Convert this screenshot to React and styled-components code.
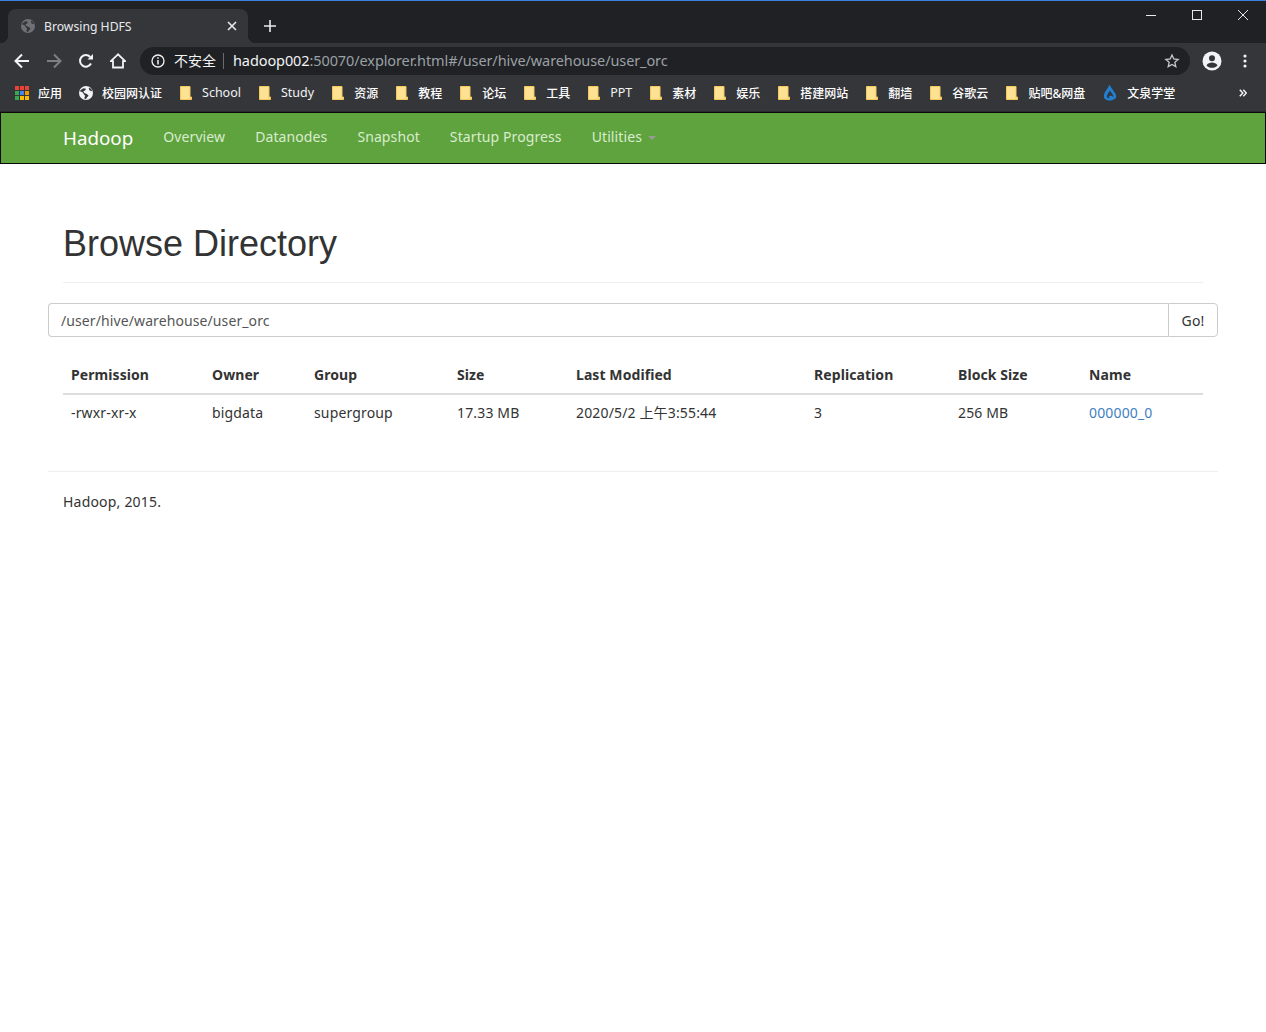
import React from 'react';
import styled, { createGlobalStyle } from 'styled-components';

const UI_FONT = '"Noto Sans", "Noto Sans CJK SC", sans-serif';

const GlobalStyle = createGlobalStyle`
  html, body {
    margin: 0;
    padding: 0;
    background: #fff;
  }
  body {
    font-family: ${UI_FONT};
    font-size: 14px;
    color: #333;
  }
`;

const TabStrip = styled.div`
  display: flex;
  height: 43px;
  box-sizing: border-box;
  border-top: 1px solid #3b82e0;
  background: #202124;
`;

const Tab = styled.div`
  position: relative;
  display: flex;
  align-items: center;
  box-sizing: border-box;
  width: 240px;
  height: 34px;
  margin: 8px 0 0 8px;
  padding: 0 11px 0 13px;
  border-radius: 8px 8px 0 0;
  background: #35363a;
  color: #e8eaed;
  font-size: 12.2px;

  &::before,
  &::after {
    content: '';
    position: absolute;
    bottom: 0;
    width: 8px;
    height: 8px;
  }
  &::before {
    left: -8px;
    background: radial-gradient(circle at 0 0, #202124 8px, #35363a 8.5px);
  }
  &::after {
    right: -8px;
    background: radial-gradient(circle at 100% 0, #202124 8px, #35363a 8.5px);
  }
`;

const TabTitle = styled.span`
  flex: 1;
  margin-left: 9px;
  white-space: nowrap;
`;

const NewTab = styled.div`
  display: flex;
  align-items: center;
  margin: 8px 0 0 16px;
  color: #e8eaed;
`;

const WindowControls = styled.div`
  display: flex;
  align-items: flex-start;
  gap: 36px;
  margin: 9px 18px 0 auto;
  color: #e8eaed;
`;

const Toolbar = styled.div`
  display: flex;
  align-items: center;
  height: 32px;
  padding: 4px 0 0 14px;
  box-sizing: border-box;
  background: #35363a;
`;

const ToolButton = styled.div`
  display: flex;
  width: 16px;
  margin-right: 16px;
  color: ${p => p.$dim ? '#7d7f83' : '#f1f3f4'};
`;

const Omnibox = styled.div`
  display: flex;
  align-items: center;
  box-sizing: border-box;
  width: 1050px;
  height: 28px;
  margin-left: -2px;
  padding: 0 10px 0 11px;
  border-radius: 14px;
  background: #202124;
  color: #f1f3f4;
`;

const Insecure = styled.span`
  margin-left: 9px;
  padding-right: 7px;
  border-right: 1px solid #6a6b6e;
  font-size: 14px;
  line-height: 16px;
`;

const UrlHost = styled.span`
  margin: -2px 0 0 9px;
  font-size: 14.5px;
  letter-spacing: -0.1px;
  white-space: nowrap;
`;

const UrlRest = styled.span`
  flex: 1;
  margin-top: -2px;
  color: #9aa0a6;
  font-size: 14.5px;
  letter-spacing: -0.1px;
  white-space: nowrap;
`;

const ProfileSlot = styled.div`
  display: flex;
  margin-left: 12px;
  color: #f1f3f4;
`;

const MenuSlot = styled.div`
  display: flex;
  margin-left: 21px;
  color: #f1f3f4;
`;

const BookmarkBar = styled.div`
  display: flex;
  align-items: center;
  gap: 18px;
  height: 37px;
  box-sizing: border-box;
  padding: 0 0 1px 15px;
  border-bottom: 1px solid #2a2b2e;
  background: #35363a;
`;

const Bookmark = styled.div`
  display: flex;
  align-items: center;
  gap: 9px;
  color: ${p => p.$latin ? '#f1f3f4' : '#fff'};
  font-size: ${p => p.$latin ? '12.5px' : '12px'};
  font-weight: ${p => p.$latin ? 400 : 500};
  white-space: nowrap;
`;

const AppsBookmark = styled(Bookmark)`
  margin-right: -1px;
`;

const More = styled.div`
  display: flex;
  margin-left: auto;
  margin-right: 19px;
  color: #f1f3f4;
`;

const Navbar = styled.nav`
  display: flex;
  align-items: center;
  box-sizing: border-box;
  height: 52px;
  padding: 0 47px;
  border: 1px solid #0a0a0a;
  background: #5fa33e;
`;

const Brand = styled.a`
  margin: 0 15px;
  padding-bottom: 1px;
  color: #fff;
  font-size: 18.8px;
`;

const NavLink = styled.a`
  padding: 0 15px 3px;
  color: #d9ecce;
  font-size: 14px;
  letter-spacing: 0.1px;
`;

const Caret = styled.span`
  display: inline-block;
  margin-left: 6px;
  vertical-align: middle;
  border-top: 4px solid #9a9a9a;
  border-left: 4px solid transparent;
  border-right: 4px solid transparent;
`;

const Container = styled.main`
  box-sizing: border-box;
  width: 1170px;
  margin: 0 auto;
`;

const PageHeader = styled.div`
  margin: 0 15px 20px;
  padding: 60px 0 19px;
  border-bottom: 1px solid #eee;
`;

const Title = styled.h1`
  margin: 0;
  color: #333;
  font-family: "Liberation Sans", Arial, sans-serif;
  font-size: 36px;
  font-weight: 500;
  line-height: 39px;
`;

const SearchGroup = styled.div`
  display: flex;
  height: 34px;
`;

const PathInput = styled.input`
  flex: 1;
  min-width: 0;
  box-sizing: border-box;
  padding: 0 12px;
  border: 1px solid #ccc;
  border-right: 0;
  border-radius: 4px 0 0 4px;
  outline: none;
  color: #555;
  font-family: ${UI_FONT};
  font-size: 14px;
  letter-spacing: 0.1px;
`;

const GoButton = styled.button`
  box-sizing: border-box;
  width: 50px;
  padding: 0;
  border: 1px solid #ccc;
  border-radius: 0 4px 4px 0;
  background: #fff;
  color: #333;
  font-family: ${UI_FONT};
  font-size: 14px;
  letter-spacing: 0.2px;
`;

const Table = styled.table`
  width: 1140px;
  margin: 20px 15px 0;
  border-collapse: collapse;
  table-layout: fixed;
`;

const Th = styled.th`
  box-sizing: border-box;
  width: ${p => p.$w}px;
  padding: 8px;
  border-bottom: 2px solid #ddd;
  font-weight: 700;
  line-height: 20px;
  letter-spacing: 0.08px;
  text-align: left;
`;

const Td = styled.td`
  padding: 8px;
  line-height: 20px;
  letter-spacing: 0.15px;
  white-space: nowrap;
`;

const FileLink = styled.a`
  color: #3f7fc0;
`;

const Rule = styled.hr`
  height: 1px;
  margin: 40px 0 20px;
  border: 0;
  background: #eee;
`;

const Footer = styled.p`
  margin: 0 15px;
  line-height: 20px;
  letter-spacing: 0.2px;
`;

const Globe = ({ size = 14, color = 'currentColor', land = '#35363a' }) => (
  <svg width={size} height={size} viewBox="0 0 16 16">
    <circle cx="8" cy="8" r="8" fill={color} />
    <path d="M1 6l3 1 2 3 1 1-1 3 2 1 1-2 2-2-2-2-3-1-1-2 2-1 1-2-3-.5-3 2zM11 2l1 3 3 1-1-3z" fill={land} />
  </svg>
);

const Folder = () => (
  <svg width="12" height="14" viewBox="0 0 12 14" style={{ marginRight: 1 }}>
    <path d="M.5.5h9.5v10.5h1.5v2.5H.5z" fill="#fde293" stroke="#f5c95c" />
    <path d="M10 11v2.5" stroke="#f5c95c" />
  </svg>
);

const AppsGrid = () => {
  const colors = ['#ea4335', '#ea4335', '#ea4335', '#34a853', '#4285f4', '#f29900', '#34a853', '#fbbc04', '#fbbc04'];
  return (
    <svg width="14" height="14" viewBox="0 0 14 14">
      {colors.map((c, i) => (
        <rect key={i} x={(i % 3) * 5} y={Math.floor(i / 3) * 5} width="4" height="4" fill={c} />
      ))}
    </svg>
  );
};

const Drop = () => (
  <svg width="14" height="17" viewBox="0 0 14 17" style={{ marginRight: 1 }}>
    <path
      fillRule="evenodd"
      d="M6.500.5C5.500 4 .8 8.500.8 12c0 2.800 2.600 4.500 5.700 4.500 3.400 0 6.700-1.500 6.700-4.200C13.200 9 8 4.500 6.500.5zM6.800 6.500C5.800 8.500 3.600 11 3.800 12.800c.2 1.300 1.700 1.700 3 1.700-1-1-1.200-2.500.2-2.800 1.500-.3 2.700.5 3.300 1.200.3-1-.4-2.300-1.500-3.700-.8-1-1.600-1.800-2-2.700z"
      fill="#1f80d6"
    />
  </svg>
);

const bookmarks = [
  { label: '校园网认证', icon: <Globe color="#f1f3f4" /> },
  { label: 'School', latin: true },
  { label: 'Study', latin: true },
  { label: '资源' },
  { label: '教程' },
  { label: '论坛' },
  { label: '工具' },
  { label: 'PPT', latin: true },
  { label: '素材' },
  { label: '娱乐' },
  { label: '搭建网站' },
  { label: '翻墙' },
  { label: '谷歌云' },
  { label: '贴吧&网盘' },
  { label: '文泉学堂', icon: <Drop /> },
];

const columns = [
  ['Permission', 141, '-rwxr-xr-x'],
  ['Owner', 102, 'bigdata'],
  ['Group', 143, 'supergroup'],
  ['Size', 119, '17.33 MB'],
  ['Last Modified', 238, '2020/5/2 上午3:55:44'],
  ['Replication', 144, '3'],
  ['Block Size', 131, '256 MB'],
];

const navItems = ['Overview', 'Datanodes', 'Snapshot', 'Startup Progress'];

export default function App() {
  return (
    <>
      <GlobalStyle />
      <TabStrip>
        <Tab>
          <Globe size={14} color="#6f7176" land="#35363a" />
          <TabTitle>Browsing HDFS</TabTitle>
          <svg width="10" height="10" viewBox="0 0 10 10">
            <path d="M1 1l8 8M9 1l-8 8" stroke="#e8eaed" strokeWidth="1.600" />
          </svg>
        </Tab>
        <NewTab>
          <svg width="12" height="12" viewBox="0 0 12 12">
            <path d="M6 0v12M0 6h12" stroke="currentColor" strokeWidth="1.600" />
          </svg>
        </NewTab>
        <WindowControls>
          <svg width="10" height="10" viewBox="0 0 10 10"><path d="M0 5.500h10" stroke="currentColor" /></svg>
          <svg width="10" height="10" viewBox="0 0 10 10"><rect x=".5" y=".5" width="9" height="9" fill="none" stroke="currentColor" /></svg>
          <svg width="10" height="10" viewBox="0 0 10 10"><path d="M0 0l10 10M10 0L0 10" stroke="currentColor" /></svg>
        </WindowControls>
      </TabStrip>
      <Toolbar>
        <ToolButton>
          <svg width="16" height="16" viewBox="0 0 16 16"><path d="M15 8H2M8 1.500L1.500 8 8 14.500" fill="none" stroke="currentColor" strokeWidth="2" /></svg>
        </ToolButton>
        <ToolButton $dim>
          <svg width="16" height="16" viewBox="0 0 16 16"><path d="M1 8h13M8 1.500L14.500 8 8 14.500" fill="none" stroke="currentColor" strokeWidth="2" /></svg>
        </ToolButton>
        <ToolButton>
          <svg width="16" height="16" viewBox="0 0 16 16">
            <path d="M13 10.500A5.800 5.800 0 1 1 12.200 4" fill="none" stroke="currentColor" strokeWidth="2" />
            <path d="M9.500 6.500H15V1z" fill="currentColor" />
          </svg>
        </ToolButton>
        <ToolButton>
          <svg width="16" height="16" viewBox="0 0 16 16"><path d="M8 1.300L.8 8.200H3v6.300h10V8.200h2.200z" fill="none" stroke="currentColor" strokeWidth="1.800" /></svg>
        </ToolButton>
        <Omnibox>
          <svg width="14" height="14" viewBox="0 0 14 14">
            <circle cx="7" cy="7" r="6" fill="none" stroke="#f1f3f4" strokeWidth="1.300" />
            <path d="M7 6v4.500M7 3.200v1.600" stroke="#f1f3f4" strokeWidth="1.500" />
          </svg>
          <Insecure>不安全</Insecure>
          <UrlHost>hadoop002</UrlHost>
          <UrlRest>:50070/explorer.html#/user/hive/warehouse/user_orc</UrlRest>
          <svg width="16" height="16" viewBox="0 0 24 24">
            <path d="M12 3l2.700 6 6.500.7-4.900 4.300 1.400 6.500L12 17.200 6.300 20.500l1.400-6.500-4.900-4.300 6.500-.7z" fill="none" stroke="#c4c7c9" strokeWidth="2" />
          </svg>
        </Omnibox>
        <ProfileSlot>
          <svg width="20" height="20" viewBox="0 0 20 20">
            <circle cx="10" cy="10" r="9.500" fill="currentColor" />
            <circle cx="10" cy="7.200" r="3" fill="#35363a" />
            <path d="M4.500 14.500c1-2.200 3.500-3 5.500-3s4.500.8 5.500 3c-1.300 1.500-3.300 2.300-5.500 2.300s-4.200-.8-5.500-2.300z" fill="#35363a" />
          </svg>
        </ProfileSlot>
        <MenuSlot>
          <svg width="4" height="14" viewBox="0 0 4 14">
            <circle cx="2" cy="2" r="1.600" fill="currentColor" />
            <circle cx="2" cy="7" r="1.600" fill="currentColor" />
            <circle cx="2" cy="12" r="1.600" fill="currentColor" />
          </svg>
        </MenuSlot>
      </Toolbar>
      <BookmarkBar>
        <AppsBookmark><AppsGrid />应用</AppsBookmark>
        {bookmarks.map(b => (
          <Bookmark key={b.label} $latin={b.latin}>{b.icon || <Folder />}{b.label}</Bookmark>
        ))}
        <More>
          <svg width="8" height="8" viewBox="0 0 8 8">
            <path d="M.8.8L3.800 4 .8 7.200M4.300.8L7.300 4 4.300 7.200" fill="none" stroke="currentColor" strokeWidth="1.500" />
          </svg>
        </More>
      </BookmarkBar>
      <Navbar>
        <Brand>Hadoop</Brand>
        {navItems.map(n => <NavLink key={n}>{n}</NavLink>)}
        <NavLink>Utilities<Caret /></NavLink>
      </Navbar>
      <Container>
        <PageHeader>
          <Title>Browse Directory</Title>
        </PageHeader>
        <SearchGroup>
          <PathInput readOnly value="/user/hive/warehouse/user_orc" />
          <GoButton>Go!</GoButton>
        </SearchGroup>
        <Table>
          <thead>
            <tr>
              {columns.map(([name, w]) => <Th key={name} $w={w}>{name}</Th>)}
              <Th $w={122}>Name</Th>
            </tr>
          </thead>
          <tbody>
            <tr>
              {columns.map(([name, , value]) => <Td key={name}>{value}</Td>)}
              <Td><FileLink>000000_0</FileLink></Td>
            </tr>
          </tbody>
        </Table>
        <Rule />
        <Footer>Hadoop, 2015.</Footer>
      </Container>
    </>
  );
}
